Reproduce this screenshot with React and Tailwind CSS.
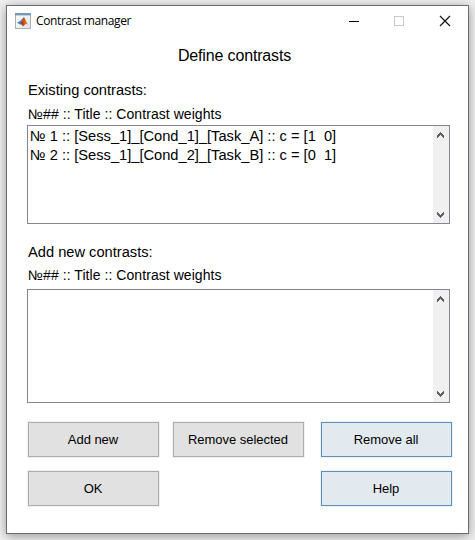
import React from "react";

function MatlabIcon() {
  return (
    <svg width="16" height="16" viewBox="0 0 16 16" className="block shrink-0">
      <defs>
        <linearGradient id="paper" x1="0" y1="0" x2="1" y2="1">
          <stop offset="0" stopColor="#ffffff" />
          <stop offset="1" stopColor="#dfe4e8" />
        </linearGradient>
        <linearGradient id="peak" x1="0" y1="0" x2="1" y2="0">
          <stop offset="0" stopColor="#7a2417" />
          <stop offset="0.5" stopColor="#d9501c" />
          <stop offset="1" stopColor="#f2a03c" />
        </linearGradient>
      </defs>
      <rect x="0.5" y="0.5" width="15" height="15" fill="url(#paper)" stroke="#a9b3bc" />
      <rect x="0" y="0" width="16" height="2.4" fill="#7798b5" />
      <path d="M2 9.6 5.2 8 7 5.9 8.4 4.5 7 9.6 5 11.4Z" fill="#4385bd" />
      <path d="M5 11.2 7 8.6 8.6 4.2 9.4 4.4 11.2 8.4 13.4 12 11 10.8 8 13.4 6.6 11.4Z" fill="url(#peak)" />
    </svg>
  );
}

function Chevron({ down }) {
  return (
    <svg width="7" height="6" viewBox="0 0 7 6" shapeRendering="crispEdges" className={down ? "block rotate-180" : "block"}>
      <path d="M3 0H4V1H5V2H6V3H7V6H6V5H5V4H4V3H3V4H2V5H1V6H0V3H1V2H2V1H3Z" fill="#606060" />
    </svg>
  );
}

function ListBox({ className, items = [] }) {
  return (
    <div className={"flex w-[423px] border border-[#828790] bg-white " + className}>
      <div className="flex-1 pl-[2px] pt-[1px] text-[14.67px] leading-[19px] whitespace-pre">
        {items.map((item) => (
          <div key={item}>{item}</div>
        ))}
      </div>
      <div className="flex w-4 flex-col items-center justify-between bg-[#f0f0f0] pb-[5px] pr-[1px] pt-[6px]">
        <Chevron />
        <Chevron down />
      </div>
    </div>
  );
}

function Button({ children, highlighted, className = "" }) {
  return (
    <button
      className={
        "flex h-[35px] w-[131px] items-center justify-center border pr-[1px] text-[13px] leading-[15px] tracking-[-0.03px] shadow-[0_0_0_1px_#f0f0f0] " +
        (highlighted ? "border-[#5a91be] bg-[#e2e9ef] " : "border-[#adadad] bg-[#e1e1e1] ") +
        className
      }
    >
      {children}
    </button>
  );
}

export default function App() {
  return (
    <div className="h-[540px] w-[475px] overflow-hidden bg-[#f0f0f0] pl-[6px] pt-[5px] font-['Liberation_Sans',Arial,sans-serif] text-black">
      <div className="flex h-[529px] w-[463px] flex-col border border-[#6b6b6b] bg-white shadow-[0_2px_10px_rgba(0,0,0,0.38)]">
        <div className="flex h-[30px] shrink-0 items-center pl-2">
          <MatlabIcon />
          <span className="ml-[5px] font-['Open_Sans','Noto_Sans',sans-serif] text-[12px] leading-4 tracking-[-0.37px]">Contrast manager</span>
          <svg width="105" height="12" viewBox="0 0 105 12" className="ml-auto mr-[16px] mt-[-1px] block">
            <path d="M2 6.5H12" stroke="#000" />
            <rect x="47.5" y="1.5" width="9" height="9" fill="none" stroke="#c8c8c8" />
            <path d="M93 1 103 11M103 1 93 11" stroke="#111" strokeWidth="1.2" />
          </svg>
        </div>
        <h1 className="mt-[10px] pr-[6px] text-center text-[16px] leading-5 tracking-[-0.15px]">Define contrasts</h1>
        <div className="flex flex-col pl-5">
          <div className="mt-[14px] pl-[1px] text-[14.67px] leading-5">Existing contrasts:</div>
          <div className="mt-[5px] pl-[1px] text-[14px] leading-[18px] tracking-[0.06px]">№## :: Title :: Contrast weights</div>
          <ListBox
            className="mt-[2px] h-[99px]"
            items={[
              "№ 1 :: [Sess_1]_[Cond_1]_[Task_A] :: c = [1  0]",
              "№ 2 :: [Sess_1]_[Cond_2]_[Task_B] :: c = [0  1]",
            ]}
          />
          <div className="mt-[18px] pl-[1px] text-[14.67px] leading-5">Add new contrasts:</div>
          <div className="mt-[4px] pl-[1px] text-[14px] leading-[18px] tracking-[0.06px]">№## :: Title :: Contrast weights</div>
          <ListBox className="mt-[5px] h-[114px]" />
          <div className="ml-[1px] mt-[19px] flex">
            <Button>Add new</Button>
            <Button className="ml-[14px]">Remove selected</Button>
            <Button highlighted className="ml-[17px]">Remove all</Button>
          </div>
          <div className="ml-[1px] mt-[14px] flex">
            <Button>OK</Button>
            <Button highlighted className="ml-[162px]">Help</Button>
          </div>
        </div>
      </div>
    </div>
  );
}
